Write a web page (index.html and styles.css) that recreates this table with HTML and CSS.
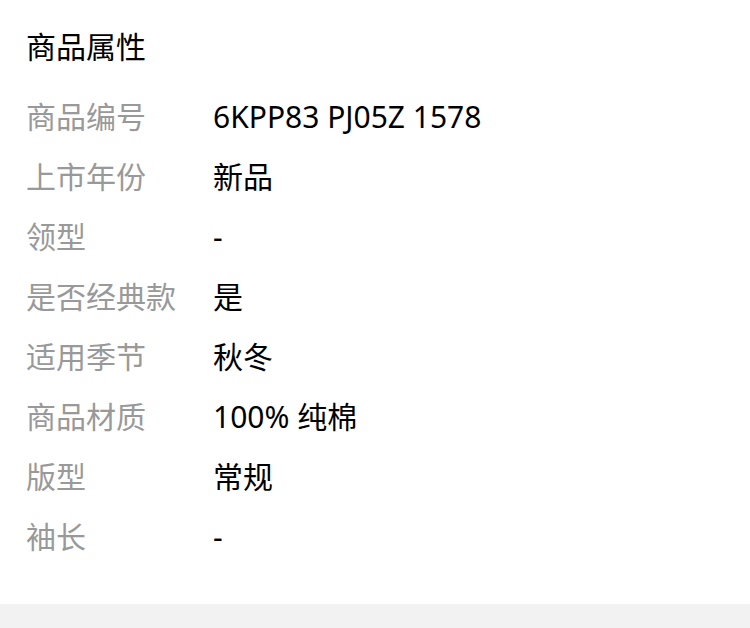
FILE: index.html
```html
<!DOCTYPE html>
<html lang="zh-CN">
<head>
<meta charset="utf-8">
<link rel="stylesheet" href="styles.css">
</head>
<body>
<section class="attrs">
  <h2 class="attrs-title">商品属性</h2>
  <dl class="attr-list">
    <div class="attr-row"><dt>商品编号</dt><dd>6KPP83 PJ05Z 1578</dd></div>
    <div class="attr-row"><dt>上市年份</dt><dd>新品</dd></div>
    <div class="attr-row"><dt>领型</dt><dd>-</dd></div>
    <div class="attr-row"><dt>是否经典款</dt><dd>是</dd></div>
    <div class="attr-row"><dt>适用季节</dt><dd>秋冬</dd></div>
    <div class="attr-row"><dt>商品材质</dt><dd>100% 纯棉</dd></div>
    <div class="attr-row"><dt>版型</dt><dd>常规</dd></div>
    <div class="attr-row"><dt>袖长</dt><dd>-</dd></div>
  </dl>
</section>
<div class="gap-bar"></div>
</body>
</html>
```

FILE: styles.css
```css
html, body {
  margin: 0;
  padding: 0;
  background: #fff;
}
body {
  font-family: "Noto Sans", "Noto Sans CJK SC", sans-serif;
  font-size: 30px;
  color: #000;
}
.attrs {
  padding: 17px 26px 37px;
}
.attrs-title {
  margin: 0 0 10px;
  font-size: 30px;
  font-weight: 400;
  line-height: 60px;
  color: #000;
}
.attr-list {
  margin: 0;
}
.attr-row {
  display: flex;
  line-height: 60px;
}
.attr-row dt {
  width: 187px;
  flex: none;
  color: #999;
}
.attr-row dd {
  margin: 0;
  color: #000;
}
.gap-bar {
  height: 30px;
  background: #f2f2f2;
}
```
